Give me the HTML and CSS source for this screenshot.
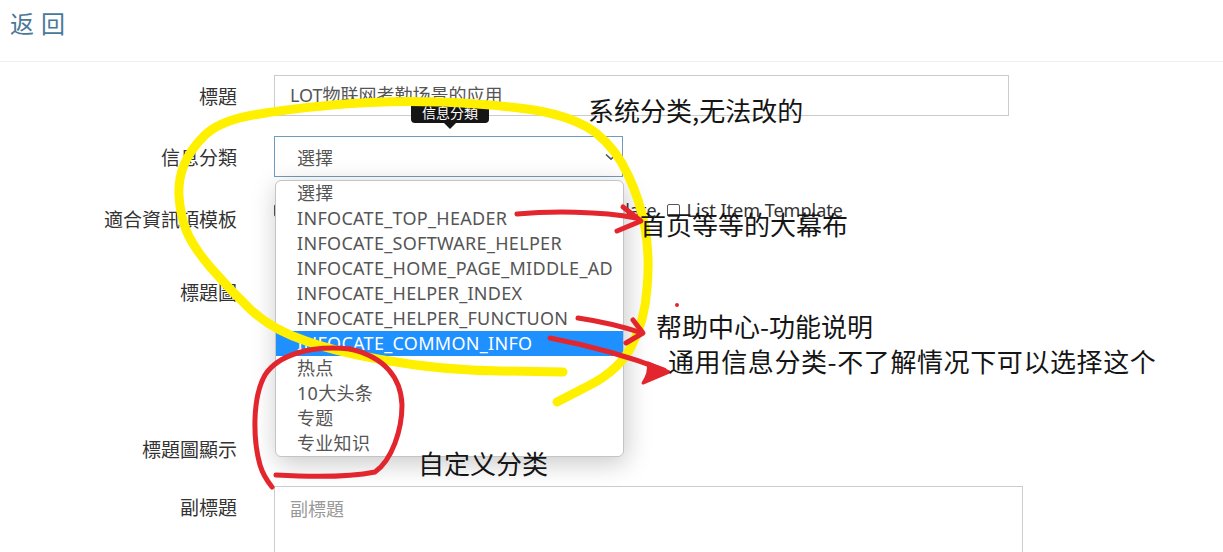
FILE: index.html
```html
<!DOCTYPE html>
<html lang="zh">
<head>
<meta charset="utf-8">
<title>信息編輯</title>
<link rel="stylesheet" href="styles.css">
</head>
<body>
<div class="page">
  <header class="topbar"><a class="back">返回</a></header>

  <div class="form">
    <div class="row r1">
      <label class="lbl">標題</label>
      <div class="field"><div class="input w-title">LOT物联网考勤场景的应用</div></div>
    </div>

    <div class="row r2">
      <label class="lbl">信息分類</label>
      <div class="field">
        <div class="select">
          <span>選擇</span>
          <svg class="chev" width="12" height="8" viewBox="0 0 12 8"><path d="M1 1.5 L6 6.2 L11 1.5" fill="none" stroke="#555" stroke-width="1.6"/></svg>
          <div class="tooltip">信息分類</div>
          <ul class="dropdown">
            <li>選擇</li>
            <li>INFOCATE_TOP_HEADER</li>
            <li>INFOCATE_SOFTWARE_HELPER</li>
            <li>INFOCATE_HOME_PAGE_MIDDLE_AD</li>
            <li>INFOCATE_HELPER_INDEX</li>
            <li>INFOCATE_HELPER_FUNCTUON</li>
            <li class="active">INFOCATE_COMMON_INFO</li>
            <li>热点</li>
            <li>10大头条</li>
            <li>专题</li>
            <li>专业知识</li>
          </ul>
        </div>
      </div>
    </div>

    <div class="row r3">
      <label class="lbl">適合資訊項模板</label>
      <div class="field checks">
        <span class="chk"><i class="box"></i>Top Header Template</span>
        <span class="chk chk-2"><i class="box"></i>Detail Template</span>
        <span class="chk chk-3"><i class="box"></i>List Item Template</span>
      </div>
    </div>

    <div class="row r4">
      <label class="lbl">標題圖</label>
      <div class="field"></div>
    </div>

    <div class="row r5">
      <label class="lbl">標題圖顯示</label>
      <div class="field"></div>
    </div>

    <div class="row r6">
      <label class="lbl">副標題</label>
      <div class="field"><div class="textarea"><span class="ph">副標題</span></div></div>
    </div>
  </div>

  <div class="annot">
    <svg class="ink" width="1223" height="552" viewBox="0 0 1223 552">
      <path class="yellow" d="M563 372 L501 371 Q440 370 390 361 Q340 353 306 341 Q273 330 251 310 Q230 290 211 268 Q193 247 186 230 Q180 213 179 196 Q178 180 184 165 Q190 150 204 136 Q218 122 248 116 Q279 110 332 105 Q386 100 439 102 Q493 104 534 110 Q575 117 596 133 Q617 150 628 175 Q640 200 645 228 Q650 257 647 288 Q645 320 632 345 Q620 370 588 386 L557 402"/>
      <path class="red" d="M517 214 C550 211 600 211 636 218"/>
      <path class="red" d="M623 207 L641 221 L617 231"/>
      <path class="red" d="M578 318 Q612 323 642 333"/>
      <path class="red" d="M633 320 L643 333 L626 343"/>
      <path class="red" d="M550 338 Q612 350 664 370"/>
      <path class="redfill" d="M648 363 L669 372 L643 383 Q650 373 648 363 Z"/>
      <path class="red" d="M350 349 C310 345 278 355 265 375 C252 398 253 440 260 465 C263 475 268 482 272 487"/>
      <path class="red" d="M276 475 C310 477 350 477 375 472 C392 460 402 430 402 405 C401 378 385 357 350 349"/>
      <circle cx="677" cy="305" r="2" fill="#e3262e"/>
    </svg>
    <div class="note n1">系统分类,无法改的</div>
    <div class="note n2">首页等等的大幕布</div>
    <div class="note n3">帮助中心-功能说明</div>
    <div class="note n4">通用信息分类-不了解情况下可以选择这个</div>
    <div class="note n5">自定义分类</div>
  </div>
</div>
</body>
</html>
```

FILE: styles.css
```css
* { box-sizing: border-box; }

body {
  margin: 0;
  background: #fff;
  color: #333;
  font-family: "Noto Sans", "Noto Sans CJK SC", sans-serif;
}

.page {
  position: relative;
  height: 552px;
  overflow: hidden;
}

.topbar {
  height: 62px;
  border-bottom: 1px solid #eceeef;
  padding: 11px 0 0 10px;
}

.back {
  display: inline-block;
  font-size: 24px;
  line-height: 26px;
  letter-spacing: 7px;
  color: #4a7898;
}

.form {
  padding-top: 13px;
}

.row {
  display: grid;
  grid-template-columns: 237px 1fr;
  column-gap: 37px;
}

.lbl {
  text-align: right;
  font-size: 19px;
  line-height: 26px;
  color: #333;
  padding-top: 10px;
}

.r1 { height: 41px; margin-bottom: 20px; }
.r1 .lbl { padding-top: 9px; }
.r2 { height: 41px; margin-bottom: 20px; }
.r2 .lbl { padding-top: 9px; }
.r3 { height: 73px; }
.r4 { height: 157px; }
.r5 { height: 59px; }
.r6 .lbl { padding-top: 9px; }

.input {
  height: 41px;
  border: 1px solid #ccc;
  padding: 0 15px;
  font-size: 18px;
  line-height: 39px;
  color: #555;
}

.w-title { width: 735px; }

.select {
  position: relative;
  width: 349px;
  height: 41px;
  border: 1px solid #6f9cbd;
  padding: 0 5px 0 22px;
  display: flex;
  align-items: center;
  justify-content: space-between;
  font-size: 18px;
  color: #555;
}

.tooltip {
  position: absolute;
  left: 136px;
  top: -35px;
  width: 78px;
  height: 21px;
  background: #151515;
  border-radius: 4px;
  color: #fff;
  font-size: 14px;
  line-height: 21px;
  text-align: center;
}

.tooltip::after {
  content: "";
  position: absolute;
  left: 33px;
  bottom: -6px;
  border-left: 6px solid transparent;
  border-right: 6px solid transparent;
  border-top: 6px solid #151515;
}

.dropdown {
  position: absolute;
  z-index: 5;
  left: 0;
  top: 43px;
  width: 349px;
  height: 277px;
  margin: 0;
  padding: 0;
  list-style: none;
  background: #fff;
  border: 1px solid #c4c4c4;
  border-radius: 6px;
  box-shadow: 2px 6px 26px rgba(0, 0, 0, 0.22);
  overflow: hidden;
}

.dropdown li {
  height: 25px;
  line-height: 25px;
  padding-left: 21px;
  font-size: 18px;
  letter-spacing: 0.3px;
  color: #555;
  white-space: nowrap;
}

.dropdown li.active {
  background: #1e90ff;
  color: #fff;
}

.checks {
  display: flex;
  align-items: flex-start;
  font-size: 18px;
  line-height: 26px;
  color: #333;
  white-space: nowrap;
}

.chk {
  display: flex;
  align-items: center;
  flex-shrink: 0;
  height: 26px;
  gap: 7px;
}

.chk-2 { margin-left: 30px; }
.chk-3 { margin-left: 10px; }

.box {
  display: inline-block;
  width: 13px;
  height: 13px;
  border: 1px solid #555;
  border-radius: 2px;
}

.textarea {
  width: 749px;
  height: 110px;
  border: 1px solid #ccc;
  padding: 10px 15px;
  font-size: 18px;
  line-height: 24px;
}

.ph { color: #999; }

.annot {
  position: absolute;
  inset: 0;
  z-index: 10;
  pointer-events: none;
}

.ink {
  position: absolute;
  left: 0;
  top: 0;
}

.yellow {
  fill: none;
  stroke: #fff000;
  stroke-width: 9;
  stroke-linecap: round;
  stroke-linejoin: round;
}

.red {
  fill: none;
  stroke: #e3262e;
  stroke-width: 5;
  stroke-linecap: round;
  stroke-linejoin: round;
}

.redfill {
  fill: #e3262e;
  stroke: #e3262e;
  stroke-width: 3;
  stroke-linejoin: round;
}

.note {
  position: absolute;
  font-family: "Noto Sans CJK SC", sans-serif;
  font-size: 26px;
  line-height: 26px;
  color: #151515;
  white-space: nowrap;
}

.n1 { left: 588px; top: 97px; }
.n2 { left: 640px; top: 211px; }
.n3 { left: 656px; top: 313px; }
.n4 { left: 668px; top: 348px; letter-spacing: 0.6px; }
.n5 { left: 418px; top: 450px; }
```
